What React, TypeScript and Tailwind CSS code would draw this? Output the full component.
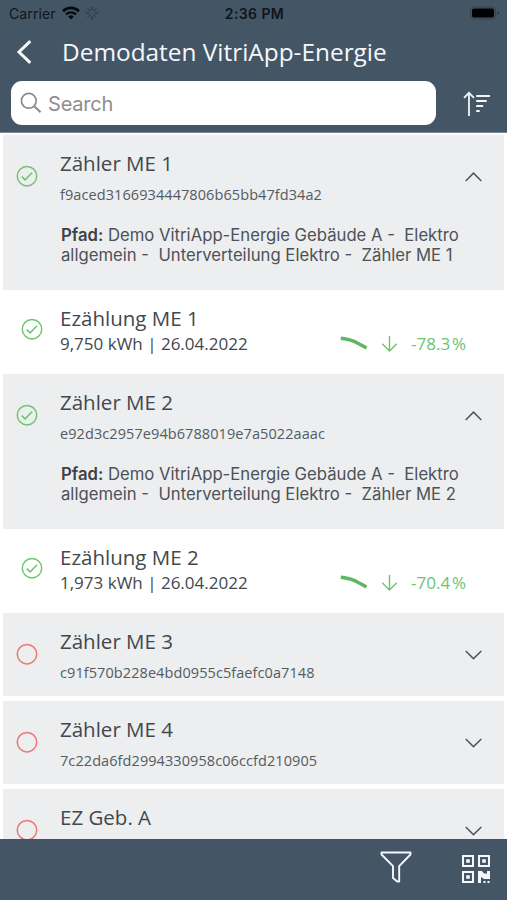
import React from 'react'

type Reading = { name: string; value: string; change: string }

type Meter = {
  name: string
  id: string
  done?: boolean
  path?: [string, string]
  reading?: Reading
}

const meters: Meter[] = [
  {
    name: 'Zähler ME 1',
    id: 'f9aced3166934447806b65bb47fd34a2',
    done: true,
    path: ['Demo VitriApp-Energie Gebäude A -  Elektro', 'allgemein -  Unterverteilung Elektro -  Zähler ME 1'],
    reading: { name: 'Ezählung ME 1', value: '9,750 kWh | 26.04.2022', change: '-78.3' },
  },
  {
    name: 'Zähler ME 2',
    id: 'e92d3c2957e94b6788019e7a5022aaac',
    done: true,
    path: ['Demo VitriApp-Energie Gebäude A -  Elektro', 'allgemein -  Unterverteilung Elektro -  Zähler ME 2'],
    reading: { name: 'Ezählung ME 2', value: '1,973 kWh | 26.04.2022', change: '-70.4' },
  },
  { name: 'Zähler ME 3', id: 'c91f570b228e4bd0955c5faefc0a7148' },
  { name: 'Zähler ME 4', id: '7c22da6fd2994330958c06ccfd210905' },
  { name: 'EZ Geb. A', id: '' },
]

const StatusIcon: React.FC<{ done?: boolean }> = ({ done }) => (
  <svg width="22" height="22" viewBox="0 0 22 22" fill="none" className={done ? 'text-[#6cc56f]' : 'text-[#ee7470]'}>
    <circle cx="11" cy="11.2" r="9.7" stroke="currentColor" strokeWidth="1.5" />
    {done && <path d="M5.8 11.6l3.3 3.3 7-7.1" stroke="currentColor" strokeWidth="1.5" />}
  </svg>
)

const Chevron: React.FC<{ open?: boolean }> = ({ open }) => (
  <svg width="18" height="10" viewBox="0 0 18 10" fill="none" stroke="#50565c" strokeWidth="1.5">
    <path d={open ? 'M.7 9l7.8-7.9L16.3 9' : 'M.7 1l7.8 7.6L16.3 1'} />
  </svg>
)

const StatusBar = () => (
  <div className="grid h-7 grid-cols-3 items-center pl-[9px] pr-[7px] font-['Inter',sans-serif] text-[14px] leading-4 text-[#10151b]">
    <div className="flex items-center">
      <span className="w-[47px] whitespace-nowrap tracking-[0.1px]">Carrier</span>
      <svg width="18" height="14" viewBox="0 0 18 14" className="-mt-[2px] ml-[6px]" fill="none" stroke="#080b0e">
        <path d="M1 5.2a11.5 11.5 0 0 1 16 0" strokeWidth="2.7" />
        <path d="M4 8.4a7.2 7.2 0 0 1 10 0" strokeWidth="2.4" />
        <path d="M9 13.4L6.2 10.6a4 4 0 0 1 5.6 0z" fill="#080b0e" stroke="none" />
      </svg>
      <svg width="14" height="14" viewBox="0 0 14 14" className="-mt-[2px] ml-[5px]" stroke="#252f39" strokeWidth="1.1" strokeLinecap="round">
        <path d="M7 1v3M7 10v3M1 7h3M10 7h3" />
        <path d="M2.8 2.8l2.1 2.1M9.1 9.1l2.1 2.1M2.8 11.2l2.1-2.1M9.1 4.9l2.1-2.1" opacity=".65" />
      </svg>
    </div>
    <span className="text-center font-semibold tracking-[0.4px]">2:36 PM</span>
    <svg width="31" height="14" viewBox="0 0 31 14" className="-mt-[2px] justify-self-end">
      <rect x="1.5" y="1" width="25" height="12" rx="3.5" fill="none" stroke="#34414e" />
      <rect x="3" y="2.5" width="22" height="9" rx="1.8" fill="#000" />
      <path d="M28.5 5.2v3.6q1.6-.5 1.6-1.8t-1.6-1.8z" fill="#2b3641" />
    </svg>
  </div>
)

const Header = () => (
  <header className="h-[133px] shrink-0 border-b border-[#7d8996] bg-[#445566]">
    <StatusBar />
    <div className="flex h-[49px] items-center pl-4 text-[#f5f8fb]">
      <svg width="16" height="26" viewBox="0 0 16 26" className="-mt-[2px]" fill="none" stroke="currentColor" strokeWidth="3">
        <path d="M14.3 2.2L3 13l11.3 10.8" />
      </svg>
      <h1 className="-mt-px ml-[30px] whitespace-nowrap text-[24.4px] leading-8">Demodaten VitriApp-Energie</h1>
    </div>
    <div className="mt-1 flex items-center pl-[11px]">
      <div className="flex h-[44px] w-[425px] items-center rounded-[11px] bg-white pl-[9px] text-[#8d8d8f]">
        <svg width="22" height="22" viewBox="0 0 22 22" fill="none" stroke="currentColor" strokeWidth="1.7">
          <circle cx="8.8" cy="8.8" r="7.4" />
          <path d="M14 14l6.5 6.2" strokeWidth="2.1" />
        </svg>
        <span className="ml-[6px] mt-[2px] font-['Inter',sans-serif] text-[20px] leading-6 tracking-[-0.2px]">Search</span>
      </div>
      <svg width="28" height="26" viewBox="0 0 28 26" className="ml-[27px] mt-px" fill="none" stroke="#f3f6f8" strokeWidth="1.8">
        <path d="M6 25V2M1 6.8l5-5 5 5" />
        <path d="M13.2 5H27M13.2 10h10.5M13.2 15h7M13.2 20h3.5" />
      </svg>
    </div>
  </header>
)

const MeterCard: React.FC<{ meter: Meter }> = ({ meter }) => (
  <div className={`shrink-0 bg-[#eceeef] ${meter.path ? 'h-[155px]' : 'mb-[5px] h-[83px]'}`}>
    <div className="flex h-[83px] pl-[13px]">
      <div className="mt-[30px] w-[44px]">
        <StatusIcon done={meter.done} />
      </div>
      <div className="w-[405px] pt-3">
        <h2 className="text-[20.5px] leading-8">{meter.name}</h2>
        <p className="mt-[6px] text-[14.5px] leading-5 tracking-[0.08px] text-[#555b61]">{meter.id}</p>
      </div>
      <div className="mt-[37px]">
        <Chevron open={!!meter.path} />
      </div>
    </div>
    {meter.path && (
      <p className="mt-[7px] whitespace-pre pl-[58px] font-['Inter',sans-serif] text-[16.7px] leading-[20.4px] text-[#4c5258]">
        <b className="font-semibold text-[#3c4248]">Pfad:</b> {meter.path[0]}
        {'\n'}
        {meter.path[1]}
      </p>
    )}
  </div>
)

const ReadingRow: React.FC<{ reading: Reading }> = ({ reading }) => (
  <div className="flex h-[84px] shrink-0 pl-[18px]">
    <div className="mt-[28px] w-[39px]">
      <StatusIcon done />
    </div>
    <div className="w-[280px] pt-3">
      <h2 className="text-[20.5px] leading-8">{reading.name}</h2>
      <p className="text-[17px] leading-5">{reading.value}</p>
    </div>
    <div className="mt-11 flex h-5 items-center text-[#6cc46f]">
      <svg width="28" height="14" viewBox="0 0 28 14" className="-mt-[2px]" fill="none" stroke="#5cb860" strokeWidth="3.4">
        <path d="M.8 2.2q8 1 12 2.7T26.5 12" />
      </svg>
      <svg width="17" height="16" viewBox="0 0 17 16" className="ml-[13px]" fill="none" stroke="currentColor" strokeWidth="1.4">
        <path d="M8.5 0v15M1.2 7.8l7.3 7.1 7.3-7.1" />
      </svg>
      <span className="ml-[13px] text-[17px] leading-5">{reading.change}</span>
      <span className="ml-[2px] text-[17px] leading-5">%</span>
    </div>
  </div>
)

const Footer = () => (
  <footer className="flex h-[61px] shrink-0 justify-end bg-[#445566] pr-[17px] text-[#f5f8fb]">
    <svg width="32" height="32" viewBox="0 0 32 32" className="mt-3" fill="none" stroke="currentColor" strokeWidth="1.9" strokeLinejoin="round">
      <path d="M1.5 1.5h29v2L19.2 15.2v15.3h-2L13 27V15.2L1.5 3.5z" />
    </svg>
    <svg width="28" height="28" viewBox="0 0 28 28" className="ml-[50px] mt-4" fill="none" stroke="currentColor" strokeWidth="2">
      <path d="M1 1h10v10H1zM17 1h10v10H17zM1 17h10v10H1z" />
      <path d="M4.2 4.2h3.6v3.6H4.2zM20.2 4.2h3.6v3.6h-3.6zM4.2 20.2h3.6v3.6H4.2z" fill="currentColor" stroke="none" />
      <path d="M16 16h4l2 2.5h3V16h3v8h-6l-3-2v6h-3zM21.5 26h2v2h-2zM25.5 26h2v2h-2z" fill="currentColor" stroke="none" />
    </svg>
  </footer>
)

export default function App() {
  return (
    <div className="flex h-[900px] w-[507px] flex-col overflow-hidden bg-white font-['Open_Sans',sans-serif] text-[#42484e]">
      <Header />
      <main className="flex min-h-0 flex-1 flex-col overflow-hidden px-[3px] pt-[2px]">
        {meters.map((meter) => (
          <React.Fragment key={meter.name}>
            <MeterCard meter={meter} />
            {meter.reading && <ReadingRow reading={meter.reading} />}
          </React.Fragment>
        ))}
      </main>
      <Footer />
    </div>
  )
}
